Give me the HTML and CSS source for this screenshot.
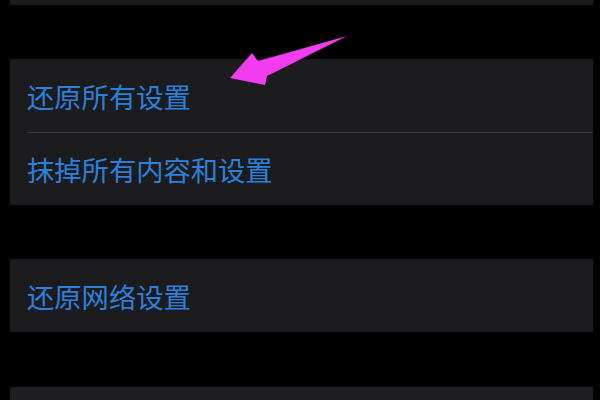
FILE: index.html
```html
<!DOCTYPE html>
<html lang="zh-CN">
<head>
<meta charset="utf-8">
<link rel="stylesheet" href="styles.css">
</head>
<body>
<div class="page">
  <div class="card card-top"></div>
  <div class="card">
    <div class="row">还原所有设置</div>
    <div class="sep"></div>
    <div class="row row-b">抹掉所有内容和设置</div>
  </div>
  <div class="card">
    <div class="row">还原网络设置</div>
  </div>
  <div class="card card-bottom"></div>
</div>
<svg class="arrow" width="600" height="400" viewBox="0 0 600 400">
  <polygon points="230,78 252,53 258,61 347,36 267,76 265,85" fill="#f23cf0"/>
</svg>
</body>
</html>
```
FILE: styles.css
```css
html, body {
  margin: 0;
  padding: 0;
  background: #000;
  width: 600px;
  height: 400px;
  overflow: hidden;
}
.page {
  display: flex;
  flex-direction: column;
  padding: 0 7px 0 10px;
  gap: 54px;
  font-family: "Noto Sans CJK SC", "Noto Sans", sans-serif;
}
.card {
  background: #1c1c1e;
  display: flex;
  flex-direction: column;
}
.card-top {
  height: 5px;
}
.card-bottom {
  height: 20px;
  margin-top: 1px;
  background: #1f1f21;
}
.row {
  height: 73px;
  display: flex;
  align-items: center;
  padding-left: 17px;
  font-size: 27.3px;
  color: #2c80dc;
}
.row-b {
  height: 72px;
}
.sep {
  height: 1px;
  background: #3a3a3c;
  margin-left: 17px;
}
.arrow {
  position: absolute;
  left: 0;
  top: 0;
}
```
